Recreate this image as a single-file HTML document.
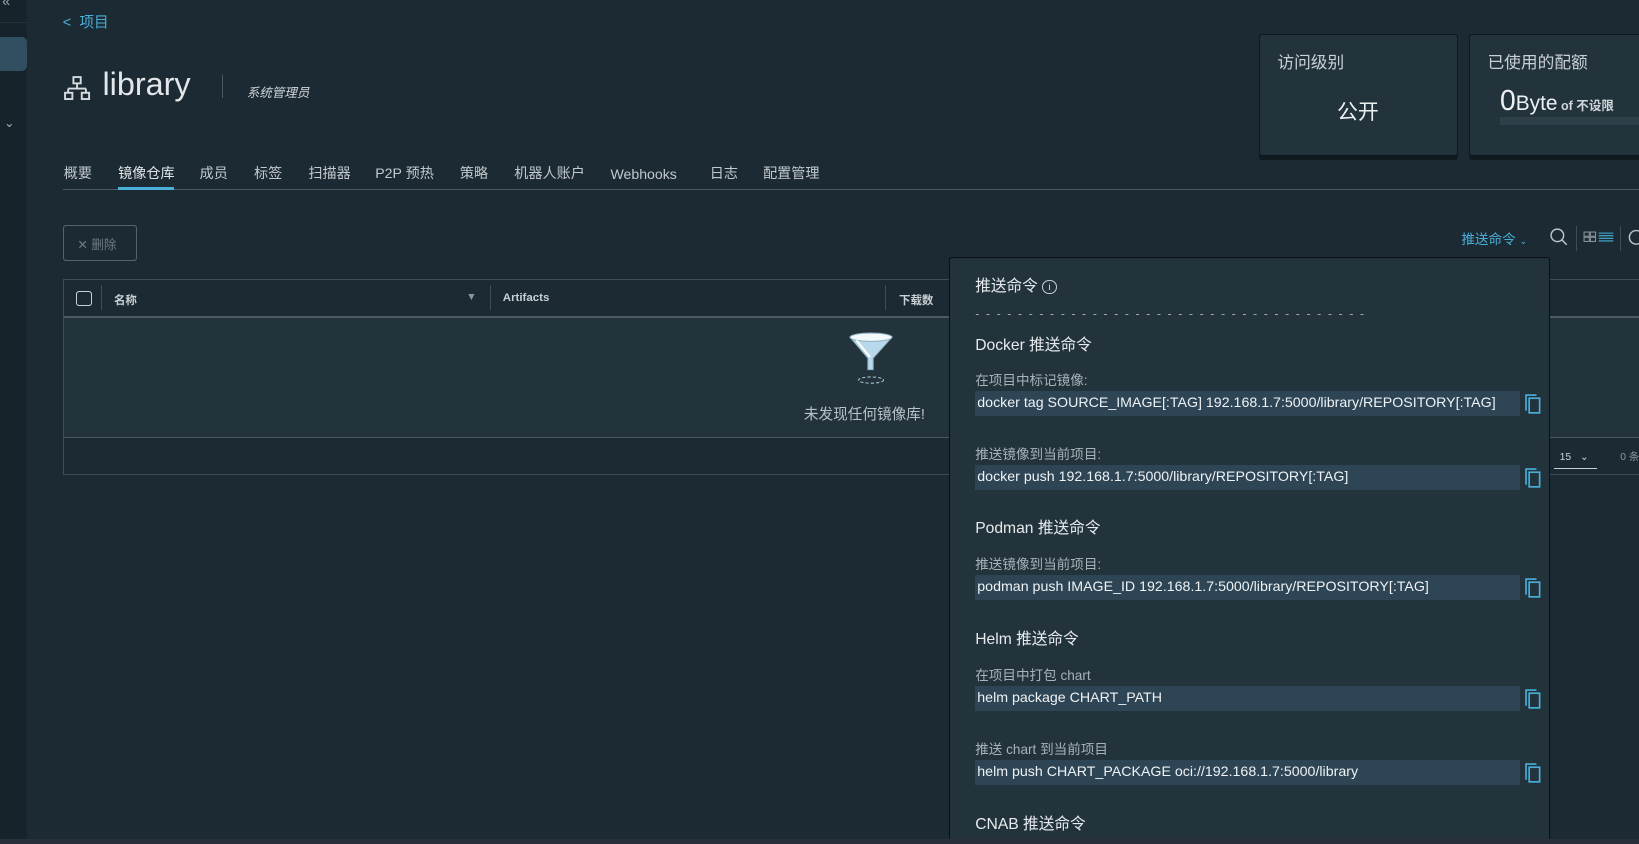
<!DOCTYPE html>
<html><head><meta charset="utf-8"><style>
html,body{margin:0;padding:0;background:#1c2a33;overflow:hidden;width:1639px;height:844px}
#w{zoom:1.0453;position:relative;width:1568px;height:807px;font-family:"Liberation Sans","Noto Sans CJK SC",sans-serif;color:#d8dde0}
.a{position:absolute}
.side{left:0;top:0;width:26px;height:807px;background:#17232a}
.t{white-space:nowrap}
.tab{top:156px;font-size:13.5px;line-height:20px;color:#c2c9cd}
.card{background:#22333c;border:1px solid #0f181d;box-shadow:0 4px 0 #111a1f;border-radius:3px}
.code{left:24px;width:521px;height:24px;background:#2e4555;font-size:13.6px;color:#eef2f4;line-height:24px;padding-left:2px;box-sizing:border-box}
.lbl{left:24px;font-size:13px;color:#a8b3b9}
.h{left:24px;font-size:15px;color:#e6eaec}
.cp{left:550px;width:16px;height:20px}
</style></head><body><div id="w">
<div class="a side"></div>
<div class="a t" style="left:2px;top:-6px;color:#9aa;font-size:14px">«</div>
<div class="a" style="left:0;top:21px;width:26px;height:1px;background:#24333b"></div>
<div class="a" style="left:0;top:35px;width:26px;height:33px;background:#324f61;border-radius:0 5px 5px 0"></div>
<div class="a t" style="left:4px;top:110px;color:#aab;font-size:12px">⌄</div>

<div class="a t" style="left:60px;top:11px;font-size:14px;color:#49afd9">&lt;&nbsp; 项目</div>
<svg class="a" style="left:61px;top:72px" width="26" height="26" viewBox="0 0 26 26" fill="none" stroke="#d8dde0" stroke-width="1.8"><rect x="9" y="2" width="7" height="6"/><path d="M12.5 8v5M4 13h17M4 13v4M21 13v4"/><rect x="1" y="17" width="7" height="6"/><rect x="17" y="17" width="7" height="6"/></svg>
<div class="a t" style="left:98px;top:63px;font-size:31px;color:#e3e7e9">library</div>
<div class="a" style="left:212px;top:72px;width:1px;height:22px;background:#4a5a63"></div>
<div class="a t" style="left:236px;top:78px;font-size:12px;font-style:italic;color:#d0d6d9">系统管理员</div>

<div class="a tab t" style="left:61px">概要</div>
<div class="a tab t" style="left:113px;color:#e0e5e8">镜像仓库</div>
<div class="a tab t" style="left:191px">成员</div>
<div class="a tab t" style="left:243px">标签</div>
<div class="a tab t" style="left:295px">扫描器</div>
<div class="a tab t" style="left:359px">P2P 预热</div>
<div class="a tab t" style="left:440px">策略</div>
<div class="a tab t" style="left:492px">机器人账户</div>
<div class="a tab t" style="left:584px;top:157px">Webhooks</div>
<div class="a tab t" style="left:679px">日志</div>
<div class="a tab t" style="left:730px">配置管理</div>
<div class="a" style="left:60px;top:181px;width:1508px;height:1px;background:#4a5a63"></div>
<div class="a" style="left:113px;top:179px;width:53px;height:3px;background:#49afd9"></div>

<div class="a card" style="left:1204px;top:33px;width:189px;height:114px"></div>
<div class="a t" style="left:1222px;top:47px;font-size:16px;color:#c9d0d4">访问级别</div>
<div class="a t" style="left:1279px;top:92px;font-size:20px;color:#eef1f3">公开</div>
<div class="a card" style="left:1405px;top:33px;width:180px;height:114px"></div>
<div class="a t" style="left:1423px;top:47px;font-size:16px;color:#c9d0d4">已使用的配额</div>
<div class="a t" style="left:1435px;top:80px;font-size:27px;color:#eef1f3">0<span style="font-size:20px">Byte</span><span style="font-size:12px;font-weight:bold;color:#d0d6d9"> of 不设限</span></div>
<div class="a" style="left:1435px;top:112px;width:133px;height:8px;background:#2e3f49"></div>

<div class="a" style="left:60px;top:215px;width:69px;height:33px;border:1px solid #55646c;border-radius:3px"></div>
<div class="a t" style="left:74px;top:224px;font-size:12px;color:#6f7c83">✕ 删除</div>

<div class="a t" style="left:1398px;top:218px;font-size:13px;color:#49afd9">推送命令 <span style="font-size:9px">⌄</span></div>
<svg class="a" style="left:1482px;top:217px" width="20" height="20" viewBox="0 0 20 20" fill="none" stroke="#bcc5ca" stroke-width="1.4"><circle cx="8" cy="8" r="6"/><path d="M12.5 12.5L17 17"/></svg>
<div class="a" style="left:1508px;top:216px;width:1px;height:24px;background:#3e4e57"></div>
<svg class="a" style="left:1514px;top:221px" width="30" height="12" viewBox="0 0 30 12" fill="none" stroke="#8a969c" stroke-width="1"><rect x="1" y="1" width="5" height="4"/><rect x="7" y="1" width="5" height="4"/><rect x="1" y="6" width="5" height="4"/><rect x="7" y="6" width="5" height="4"/><path d="M15 2h14M15 4.5h14M15 7h14M15 9.5h14" stroke="#49afd9"/></svg>
<div class="a" style="left:1550px;top:216px;width:1px;height:24px;background:#3e4e57"></div>
<svg class="a" style="left:1557px;top:218px" width="16" height="18" viewBox="0 0 16 18" fill="none" stroke="#bcc5ca" stroke-width="1.4"><path d="M13 5A6.5 6.5 0 1 0 14 11"/></svg>

<div class="a" style="left:60px;top:267px;width:1508px;height:187px;border:1px solid #3e4e57;border-right:none;box-sizing:border-box"></div>
<div class="a" style="left:61px;top:302px;width:1507px;height:2px;background:#4a5a63"></div>
<div class="a" style="left:61px;top:304px;width:1507px;height:114px;background:#22333c"></div>
<div class="a" style="left:61px;top:418px;width:1507px;height:1px;background:#4a5a63"></div>
<div class="a" style="left:73px;top:278px;width:13px;height:13px;border:1px solid #c8d0d4;border-radius:3px"></div>
<div class="a" style="left:97px;top:273px;width:1px;height:24px;background:#3e4e57"></div>
<div class="a t" style="left:109px;top:279px;font-size:11px;font-weight:bold;color:#c8d0d4">名称</div>
<div class="a t" style="left:446px;top:279px;font-size:10px;color:#8a969c">▼</div>
<div class="a" style="left:469px;top:273px;width:1px;height:24px;background:#3e4e57"></div>
<div class="a t" style="left:481px;top:279px;font-size:11px;font-weight:bold;color:#c8d0d4">Artifacts</div>
<div class="a" style="left:847px;top:273px;width:1px;height:24px;background:#3e4e57"></div>
<div class="a t" style="left:860px;top:279px;font-size:11px;font-weight:bold;color:#c8d0d4">下载数</div>
<svg class="a" style="left:810px;top:318px" width="46" height="52" viewBox="0 0 46 52"><path d="M3 5L20 25V36H25V25L43 5Z" fill="#b9d8ea" stroke="#8fb4c8"/><ellipse cx="23" cy="5" rx="20" ry="4" fill="#f4f9fc" stroke="#8fb4c8"/><path d="M9 8L22 24" stroke="#fff" stroke-width="2"/><ellipse cx="23" cy="46" rx="12" ry="3" fill="none" stroke="#a8c6d6" stroke-dasharray="3 2"/></svg>
<div class="a t" style="left:769px;top:386px;font-size:14px;color:#b8c2c7">未发现任何镜像库!</div>
<div class="a t" style="left:1492px;top:431px;font-size:10px;color:#c8d0d4">15 &nbsp;&nbsp;⌄</div>
<div class="a" style="left:1487px;top:448px;width:41px;height:1px;background:#c8d0d4"></div>
<div class="a t" style="left:1550px;top:430px;font-size:10px;color:#8a969c">0 条</div>

<div class="a" style="left:908px;top:246px;width:573px;height:570px;background:#22333c;border:1px solid #0a1115;border-radius:3px">
<div class="a t" style="left:24px;top:14px;font-size:15px;color:#e6eaec">推送命令 <span style="display:inline-block;width:12px;height:12px;border:1px solid #c8d0d4;border-radius:50%;font-size:9px;text-align:center;line-height:12px;vertical-align:1px">i</span></div>
<div class="a t" style="left:24px;top:47px;font-size:12px;color:#9aa6ac;letter-spacing:1.45px">- - - - - - - - - - - - - - - - - - - - - - - - - - - - - - - - - - - - -</div>
<div class="a h t" style="top:71px">Docker 推送命令</div>
<div class="a lbl t" style="top:106px">在项目中标记镜像:</div>
<div class="a code t" style="top:127px">docker tag SOURCE_IMAGE[:TAG] 192.168.1.7:5000/library/REPOSITORY[:TAG]</div>
<div class="a lbl t" style="top:177px">推送镜像到当前项目:</div>
<div class="a code t" style="top:198px">docker push 192.168.1.7:5000/library/REPOSITORY[:TAG]</div>
<div class="a h t" style="top:246px">Podman 推送命令</div>
<div class="a lbl t" style="top:282px">推送镜像到当前项目:</div>
<div class="a code t" style="top:303px">podman push IMAGE_ID 192.168.1.7:5000/library/REPOSITORY[:TAG]</div>
<div class="a h t" style="top:352px">Helm 推送命令</div>
<div class="a lbl t" style="top:388px">在项目中打包 chart</div>
<div class="a code t" style="top:409px">helm package CHART_PATH</div>
<div class="a lbl t" style="top:459px">推送 chart 到当前项目</div>
<div class="a code t" style="top:480px">helm push CHART_PACKAGE oci://192.168.1.7:5000/library</div>
<div class="a h t" style="top:529px">CNAB 推送命令</div>
<svg class="a cp" style="top:129px" viewBox="0 0 16 20" fill="none" stroke="#49afd9" stroke-width="1.6"><path d="M1 17V2h10"/><rect x="4" y="5" width="10" height="14"/></svg>
<svg class="a cp" style="top:200px" viewBox="0 0 16 20" fill="none" stroke="#49afd9" stroke-width="1.6"><path d="M1 17V2h10"/><rect x="4" y="5" width="10" height="14"/></svg>
<svg class="a cp" style="top:305px" viewBox="0 0 16 20" fill="none" stroke="#49afd9" stroke-width="1.6"><path d="M1 17V2h10"/><rect x="4" y="5" width="10" height="14"/></svg>
<svg class="a cp" style="top:411px" viewBox="0 0 16 20" fill="none" stroke="#49afd9" stroke-width="1.6"><path d="M1 17V2h10"/><rect x="4" y="5" width="10" height="14"/></svg>
<svg class="a cp" style="top:482px" viewBox="0 0 16 20" fill="none" stroke="#49afd9" stroke-width="1.6"><path d="M1 17V2h10"/><rect x="4" y="5" width="10" height="14"/></svg>
</div>
<div class="a" style="left:0;top:803px;width:1568px;height:4px;background:#2a303b"></div>
</div></body></html>
